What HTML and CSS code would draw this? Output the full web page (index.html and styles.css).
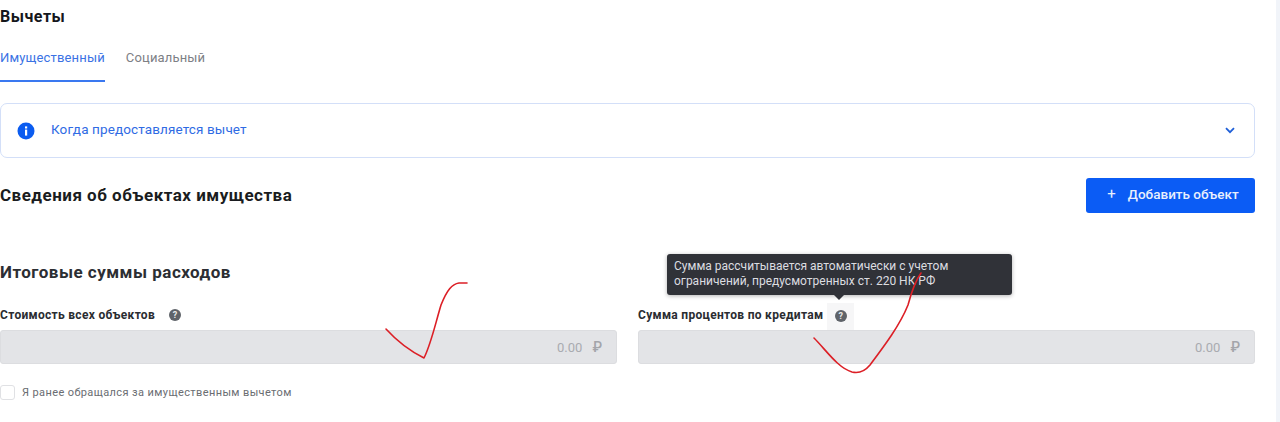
FILE: index.html
```html
<!DOCTYPE html>
<html lang="ru">
<head>
    <meta charset="UTF-8">
    <meta name="viewport" content="width=device-width, initial-scale=1.0">
    <title>Вычеты</title>
    <link rel="stylesheet" href="styles.css">
</head>
<body>
    <div class="page">
        <h1 class="page-title">Вычеты</h1>

        <nav class="tabs">
            <a class="tab active" href="#">Имущественный</a>
            <a class="tab" href="#">Социальный</a>
        </nav>

        <div class="notice">
            <svg class="notice-icon" width="18" height="18" viewBox="0 0 18 18">
                <circle cx="9" cy="9" r="8.5" fill="#0b5cf0"/>
                <rect x="8" y="7.6" width="2.2" height="6" fill="#fff"/>
                <rect x="8" y="4.4" width="2.2" height="2.1" fill="#fff"/>
            </svg>
            <span class="notice-text">Когда предоставляется вычет</span>
            <svg class="notice-arrow" width="10" height="7" viewBox="0 0 10 7">
                <path d="M1 1.2 L5 5.2 L9 1.2" fill="none" stroke="#1f5fd8" stroke-width="1.8"/>
            </svg>
        </div>

        <div class="objects-row">
            <h2 class="section-title">Сведения об объектах имущества</h2>
            <button class="add-btn"><span class="plus">+</span>Добавить объект</button>
        </div>

        <h2 class="section-title totals-title">Итоговые суммы расходов</h2>

        <div class="fields">
            <div class="field">
                <div class="field-label">
                    Стоимость всех объектов
                    <span class="help help-wide">?</span>
                </div>
                <div class="field-input"><span>0.00</span><span class="rub">₽</span></div>
            </div>
            <div class="field">
                <div class="field-label">
                    Сумма процентов по кредитам
                    <span class="help-box"><span class="help">?</span></span>
                </div>
                <div class="field-input"><span>0.00</span><span class="rub">₽</span></div>
            </div>
        </div>

        <label class="check-row">
            <span class="checkbox"></span>
            Я ранее обращался за имущественным вычетом
        </label>

        <div class="tooltip">
            Сумма рассчитывается автоматически с учетом<br>
            ограничений, предусмотренных ст. 220 НК РФ
        </div>

        <!-- red pen marks on top of the screenshot -->
        <svg class="marks" width="1280" height="422" viewBox="0 0 1280 422">
            <path d="M386 329 C396 340 408 350 424 358 C431 344 435 325 441 305 C447 290 452 284 459 283 L467 283"/>
            <path d="M814 338 C826 350 838 368 852 372 C860 374 865 371 870 365 C885 345 900 325 908 305 C912 290 916 280 921 273"/>
        </svg>
    </div>
</body>
</html>
```

FILE: styles.css
```css
html, body {
    margin: 0;
    padding: 0;
}

body {
    font-family: Roboto, "Noto Sans", sans-serif;
    background-color: #f1f4f9;
    color: #15171c;
    overflow: hidden;
}

.page {
    position: relative;
    box-sizing: border-box;
    width: 1276px;
    height: 422px;
    padding: 7px 21px 0 0;
    background-color: #fff;
}

.page-title {
    margin: 0;
    font-size: 16px;
    line-height: 20px;
    font-weight: 700;
    letter-spacing: 0.5px;
}

.tabs {
    display: flex;
    gap: 21px;
    margin-top: 17px;
    height: 38px;
}

.tab {
    box-sizing: border-box;
    height: 38px;
    padding-top: 6px;
    font-size: 13px;
    line-height: 16px;
    letter-spacing: 0.16px;
    color: #7d8085;
    text-decoration: none;
}

.tab.active {
    color: #3a72e4;
    border-bottom: 2px solid #3a78f0;
}

.notice {
    display: flex;
    align-items: center;
    box-sizing: border-box;
    height: 55px;
    margin-top: 21px;
    padding: 0 19px 0 16px;
    border: 1px solid #d3dff8;
    border-radius: 7px;
}

.notice-text {
    flex: 1;
    margin-left: 16px;
    padding-bottom: 3px;
    font-size: 13.5px;
    letter-spacing: 0.12px;
    color: #2f6be4;
}

.objects-row {
    display: flex;
    justify-content: space-between;
    align-items: center;
    margin-top: 20px;
}

.objects-row .section-title {
    padding-bottom: 2px;
}

.section-title {
    margin: 0;
    font-size: 17px;
    line-height: 22px;
    font-weight: 700;
    letter-spacing: 0.48px;
    color: #1a1c20;
}

.add-btn {
    box-sizing: border-box;
    width: 169px;
    height: 35px;
    padding: 0 0 3px 5px;
    border: none;
    border-radius: 3px;
    background-color: #0b5cf5;
    color: #e8effd;
    font-family: inherit;
    font-size: 13.5px;
    font-weight: 500;
    white-space: nowrap;
}

.plus {
    margin-right: 12px;
    font-size: 15px;
    font-weight: 400;
}

.totals-title {
    margin-top: 48px;
    color: #2c2e33;
}

.fields {
    display: flex;
    gap: 21px;
    margin-top: 23px;
}

.field {
    flex: 1;
}

.field-label {
    display: flex;
    align-items: center;
    height: 18px;
    font-size: 12px;
    font-weight: 700;
    letter-spacing: 0.3px;
    color: #2a2c31;
    white-space: nowrap;
}

.help {
    display: block;
    width: 12px;
    height: 12px;
    border-radius: 50%;
    background-color: #5f6369;
    color: #e8e8e8;
    font-size: 9px;
    line-height: 12px;
    text-align: center;
}

.help-wide {
    margin-left: 14px;
}

.help-box {
    display: flex;
    align-items: center;
    justify-content: center;
    width: 27px;
    height: 27px;
    margin: 2px 0 0 4px;
    background-color: #f6f6f7;
}

.field-input {
    display: flex;
    justify-content: flex-end;
    align-items: center;
    gap: 10px;
    box-sizing: border-box;
    height: 34px;
    margin-top: 6px;
    padding-right: 14px;
    border: 1px solid #dcdde0;
    border-radius: 3px;
    background-color: #e3e4e7;
    font-size: 13px;
    color: #a9abb0;
}

.rub {
    font-size: 14px;
    font-weight: 500;
    color: #a3a5aa;
}

.check-row {
    display: flex;
    align-items: center;
    gap: 7px;
    margin-top: 21px;
    font-size: 11px;
    letter-spacing: 0.39px;
    color: #6a6d72;
}

.checkbox {
    box-sizing: border-box;
    width: 15px;
    height: 15px;
    border: 1px solid #e0e1e4;
    border-radius: 3px;
    background-color: #fff;
}

.tooltip {
    position: absolute;
    left: 667px;
    top: 254px;
    box-sizing: border-box;
    width: 345px;
    height: 41px;
    padding: 5px 7px;
    border-radius: 3px;
    background-color: #303238;
    box-shadow: 0 1px 4px rgba(0, 0, 0, 0.3);
    color: #dcdde0;
    font-size: 12px;
    line-height: 15px;
    white-space: nowrap;
}

.tooltip::after {
    content: "";
    position: absolute;
    left: 167px;
    bottom: -5px;
    border-left: 5px solid transparent;
    border-right: 5px solid transparent;
    border-top: 5px solid #303238;
}

.marks {
    position: absolute;
    left: 0;
    top: 0;
    pointer-events: none;
}

.marks path {
    fill: none;
    stroke: #dc1f26;
    stroke-width: 1.6;
    stroke-linecap: round;
    stroke-linejoin: round;
}
```
